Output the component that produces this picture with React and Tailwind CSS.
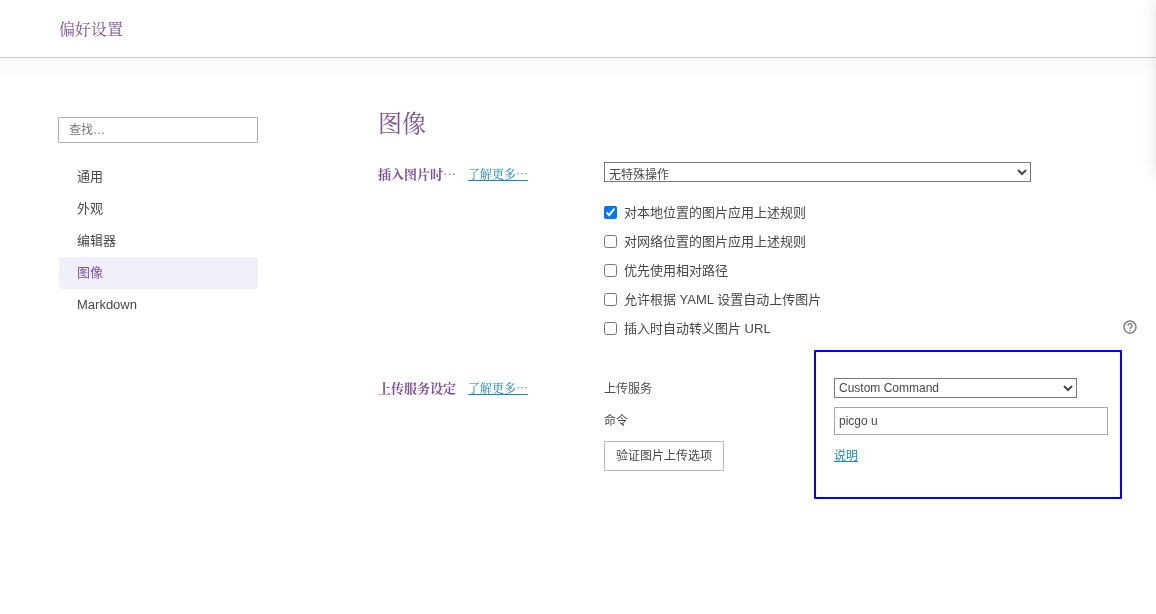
import React, { useState } from 'react';
import { MdHelpOutline } from 'react-icons/md';

const NAV_ITEMS = ['通用', '外观', '编辑器', '图像', 'Markdown'];

const RULES = [
    { id: 'local', label: '对本地位置的图片应用上述规则', checked: true },
    { id: 'network', label: '对网络位置的图片应用上述规则', checked: false },
    { id: 'relative', label: '优先使用相对路径', checked: false },
    { id: 'yaml', label: '允许根据 YAML 设置自动上传图片', checked: false },
    { id: 'escape', label: '插入时自动转义图片 URL', checked: false },
];

const SectionLabel = ({ title }) => (
    <div className="flex w-[226px] shrink-0 items-center gap-3 font-['Noto_Serif_CJK_SC',serif]" lang="zh-CN">
        <h3 className="text-[13px] leading-5 font-bold text-[#7e5198]">{title}</h3>
        <a href="#more" className="text-xs leading-5 text-[#1b86c3] underline">了解更多…</a>
    </div>
);

const Sidebar = ({ active, onSelect }) => (
    <aside className="w-[200px] shrink-0">
        <input
            type="search"
            aria-label="查找"
            placeholder="查找…"
            className="block h-[26px] w-full rounded-[1px] border border-[#aaa] px-2.5 text-xs outline-none placeholder:text-[#777]"
        />
        <nav className="mt-[18px] ml-px flex flex-col">
            {NAV_ITEMS.map((item) => (
                <button
                    key={item}
                    type="button"
                    onClick={() => onSelect(item)}
                    className={
                        item === active
                            ? 'h-8 rounded-[3px] bg-[#f1eff9] px-[18px] text-left text-[#8158a3]'
                            : 'h-8 rounded-[3px] px-[18px] text-left'
                    }
                >
                    {item}
                </button>
            ))}
        </nav>
    </aside>
);

const App = () => {
    const [active, setActive] = useState('图像');

    return (
        <div className="min-h-screen bg-white font-['Liberation_Sans','Noto_Sans_CJK_SC',sans-serif] text-[13px] text-[#484848]">
            <div className="relative min-h-screen overflow-hidden will-change-transform">
                <div className="absolute top-0 left-full h-[175px] w-10 shadow-[0_0_16px_rgba(0,0,0,0.12)]"></div>
                <header className="flex h-[58px] items-center border-b border-[#ccc] px-[59px] pt-[3px] shadow-[0_0_24px_8px_rgba(0,0,0,0.03)]">
                    <h1 className="font-['Liberation_Serif','Noto_Serif_CJK_SC',serif] text-base text-[#7e5198]">偏好设置</h1>
                </header>

                <div className="flex gap-[120px] pt-[59px] pr-[19px] pl-[58px]">
                    <Sidebar active={active} onSelect={setActive} />

                    <main className="-mt-[11px] min-w-0 grow">
                        <h2 className="font-['Liberation_Serif','Noto_Serif_CJK_SC',serif] text-2xl leading-9 text-[#7e5198]">图像</h2>

                        <section className="mt-5 flex items-start">
                            <div className="pt-0.5">
                                <SectionLabel title="插入图片时…" />
                            </div>
                            <div className="min-w-0 grow">
                                <select
                                    aria-label="插入图片时"
                                    className="block h-5 w-[427px] max-w-full appearance-auto border border-[#767676] bg-white pt-1 text-xs"
                                >
                                    <option>无特殊操作</option>
                                </select>
                                <ul className="mt-4">
                                    {RULES.map((rule) => (
                                        <li key={rule.id} className="flex h-[29px] items-center justify-between">
                                            <label className="flex items-center gap-[7px]">
                                                <input type="checkbox" defaultChecked={rule.checked} className="size-[13px]" />
                                                {rule.label}
                                            </label>
                                            {rule.id === 'escape' && (
                                                <button type="button" aria-label="帮助" className="-mr-px pb-[3px] text-[#777]">
                                                    <MdHelpOutline size={16} />
                                                </button>
                                            )}
                                        </li>
                                    ))}
                                </ul>
                            </div>
                        </section>

                        <section className="mt-[7px] flex items-start">
                            <div className="pt-7">
                                <SectionLabel title="上传服务设定" />
                            </div>
                            <div className="w-[210px] shrink-0 pt-[23px] text-xs">
                                <label htmlFor="service" className="flex h-8 items-center">上传服务</label>
                                <label htmlFor="command" className="flex h-8 items-center">命令</label>
                                <button type="button" className="mt-1 h-[30px] w-[120px] border border-[#bbb] text-xs">
                                    验证图片上传选项
                                </button>
                            </div>
                            <div className="mr-[15px] h-[149px] min-w-0 grow rounded-[1px] border-2 border-[#0000ff] px-[18px] pt-[26px]">
                                <select
                                    id="service"
                                    className="block h-5 w-[243px] appearance-auto border border-[#767676] bg-white text-xs"
                                >
                                    <option>Custom Command</option>
                                </select>
                                <input
                                    id="command"
                                    type="text"
                                    defaultValue="picgo u"
                                    className="mt-[9px] block h-7 w-[274px] border border-[#aaa] px-1 text-xs outline-none"
                                />
                                <a href="#help" className="mt-[11px] inline-block text-xs leading-5 text-[#1b86c3] underline">说明</a>
                            </div>
                        </section>
                    </main>
                </div>
            </div>
        </div>
    );
};

export default App;
